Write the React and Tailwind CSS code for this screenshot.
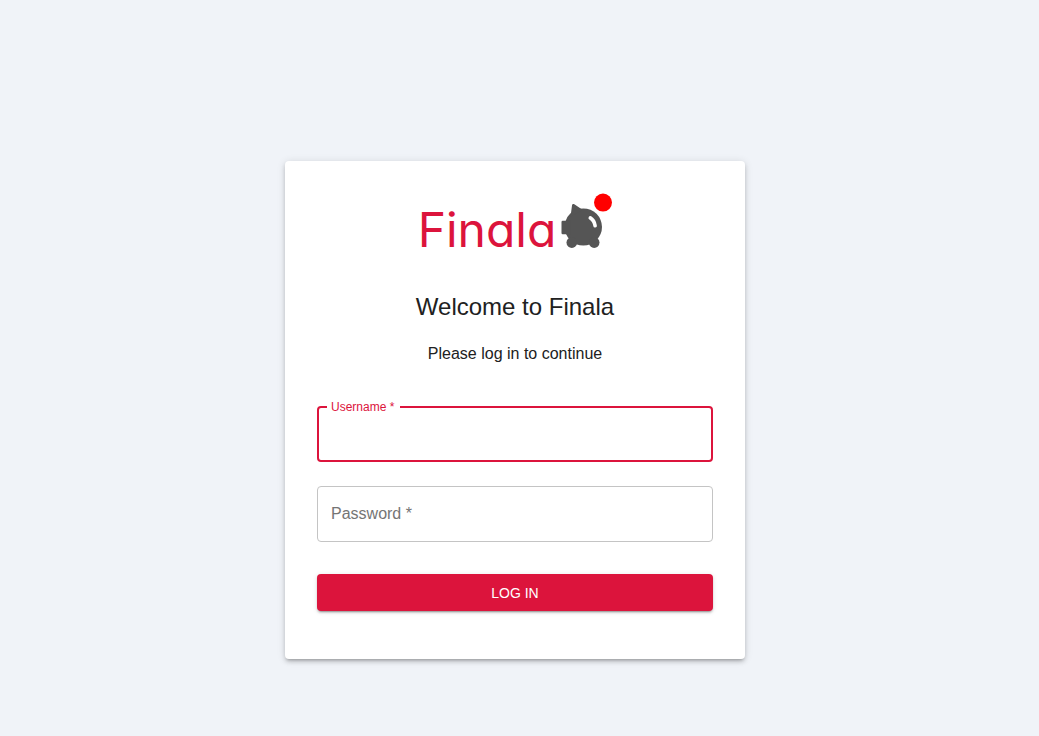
import { useState } from "react";
import clsx from "clsx";

function PiggyBank() {
  return (
    <svg width="52" height="56" viewBox="0 0 52 56" aria-hidden="true">
      <g fill="#555555">
        <ellipse cx="23.300" cy="34" rx="18.700" ry="18.600" />
        <path d="M12 12.500c.1-1.400 1.200-1.900 2.300-1.200l8.200 5.400-12 7Z" />
        <rect x="1.500" y="27.700" width="9" height="13.600" rx="1.200" />
        <circle cx="11.800" cy="49.600" r="5.300" />
        <circle cx="34.200" cy="49.600" r="5.300" />
      </g>
      <path d="M30.300 24.900c2.500 1.500 4.300 4.400 4.800 7.900" fill="none" stroke="#fff" strokeWidth="3.600" strokeLinecap="round" />
      <circle cx="43" cy="9.600" r="9" fill="#ff0000" />
    </svg>
  );
}

function Logo() {
  return (
    <div className="flex h-16 items-start justify-center gap-1">
      <span className="pt-3 font-['Inter',sans-serif] text-5xl leading-[50px] text-[#dc143c] [font-feature-settings:'cv11']">
        Finala
      </span>
      <PiggyBank />
    </div>
  );
}

function TextField({ id, label, type, value, focused, onChange, onFocus, onBlur }) {
  const raised = focused || value !== "";
  return (
    <div className="relative">
      <input
        id={id}
        name={id}
        type={type}
        required
        value={value}
        onChange={(event) => onChange(event.target.value)}
        onFocus={onFocus}
        onBlur={onBlur}
        className={clsx(
          "block h-14 w-full rounded bg-white px-3.5 text-base outline-none",
          focused ? "border-2 border-[#dc143c]" : "border border-[#c4c4c4] hover:border-[#212121]"
        )}
      />
      <label
        htmlFor={id}
        className={clsx(
          "pointer-events-none absolute left-2.5 bg-white pr-1.5 pl-1",
          raised ? "-top-1.5 text-xs leading-3.5" : "top-4 text-base leading-6",
          focused ? "text-[#dc143c]" : "text-[#757575]"
        )}
      >
        {label} *
      </label>
    </div>
  );
}

export default function App() {
  const [username, setUsername] = useState("");
  const [password, setPassword] = useState("");
  const [active, setActive] = useState("username");

  return (
    <div className="flex min-h-screen items-center justify-center bg-[#f0f3f8] pt-21 pr-[9px] font-['Liberation_Sans',Arial,sans-serif] text-[#212121]">
      <main className="w-full max-w-[460px] rounded bg-white px-8 pt-8 pb-12 shadow-[0_3px_3px_-2px_rgba(0,0,0,0.2),0_3px_4px_0_rgba(0,0,0,0.14),0_1px_8px_0_rgba(0,0,0,0.12)]">
        <Logo />
        <h1 className="mt-[34px] text-center text-2xl leading-8">Welcome to Finala</h1>
        <p className="mt-[19px] text-center text-base leading-6">Please log in to continue</p>
        <form className="mt-10" onSubmit={(event) => event.preventDefault()}>
          <div className="flex flex-col gap-6">
            <TextField
              id="username"
              label="Username"
              type="text"
              value={username}
              focused={active === "username"}
              onChange={setUsername}
              onFocus={() => setActive("username")}
              onBlur={() => setActive("")}
            />
            <TextField
              id="password"
              label="Password"
              type="password"
              value={password}
              focused={active === "password"}
              onChange={setPassword}
              onFocus={() => setActive("password")}
              onBlur={() => setActive("")}
            />
          </div>
          <button
            type="submit"
            className="mt-8 h-[37px] w-full rounded bg-[#dc143c] text-sm text-white uppercase shadow-[0_3px_1px_-2px_rgba(0,0,0,0.2),0_2px_2px_0_rgba(0,0,0,0.14),0_1px_5px_0_rgba(0,0,0,0.12)] hover:bg-[#9a0e2a]"
          >
            Log in
          </button>
        </form>
      </main>
    </div>
  );
}
